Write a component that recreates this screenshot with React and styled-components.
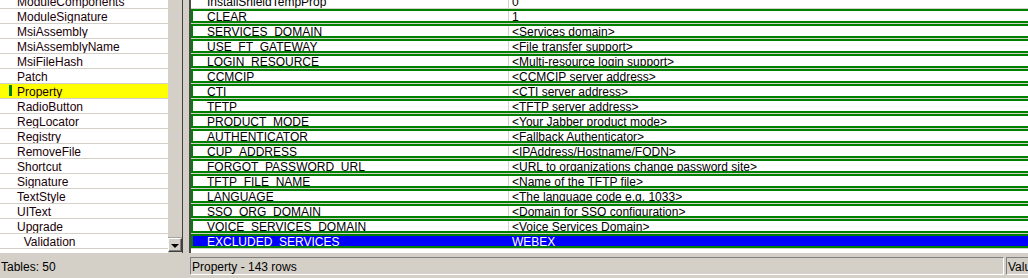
import React from 'react';
import styled, { createGlobalStyle, css } from 'styled-components';

const tables = [
  { name: 'ModuleComponents' },
  { name: 'ModuleSignature' },
  { name: 'MsiAssembly' },
  { name: 'MsiAssemblyName' },
  { name: 'MsiFileHash' },
  { name: 'Patch' },
  { name: 'Property', current: true },
  { name: 'RadioButton' },
  { name: 'RegLocator' },
  { name: 'Registry' },
  { name: 'RemoveFile' },
  { name: 'Shortcut' },
  { name: 'Signature' },
  { name: 'TextStyle' },
  { name: 'UIText' },
  { name: 'Upgrade' },
  { name: '_Validation' },
];

const properties = [
  { key: 'InstallShieldTempProp', value: '0' },
  { key: 'CLEAR', value: '1', changed: true },
  { key: 'SERVICES_DOMAIN', value: '<Services domain>', changed: true },
  { key: 'USE_FT_GATEWAY', value: '<File transfer support>', changed: true },
  { key: 'LOGIN_RESOURCE', value: '<Multi-resource login support>', changed: true },
  { key: 'CCMCIP', value: '<CCMCIP server address>', changed: true },
  { key: 'CTI', value: '<CTI server address>', changed: true },
  { key: 'TFTP', value: '<TFTP server address>', changed: true },
  { key: 'PRODUCT_MODE', value: '<Your Jabber product mode>', changed: true },
  { key: 'AUTHENTICATOR', value: '<Fallback Authenticator>', changed: true },
  { key: 'CUP_ADDRESS', value: '<IPAddress/Hostname/FQDN>', changed: true },
  { key: 'FORGOT_PASSWORD_URL', value: '<URL to organizations change password site>', changed: true },
  { key: 'TFTP_FILE_NAME', value: '<Name of the TFTP file>', changed: true },
  { key: 'LANGUAGE', value: '<The language code e.g. 1033>', changed: true },
  { key: 'SSO_ORG_DOMAIN', value: '<Domain for SSO configuration>', changed: true },
  { key: 'VOICE_SERVICES_DOMAIN', value: '<Voice Services Domain>', changed: true },
  { key: 'EXCLUDED_SERVICES', value: 'WEBEX', changed: true, selected: true },
];

function App() {
  return (
    <>
      <GlobalStyle />
      <Window>
        <Main>
          <TablePane>
            <TableList>
              {tables.map((t) => (
                <TableItem key={t.name} $current={t.current}>
                  {t.name}
                </TableItem>
              ))}
            </TableList>
            <ScrollBar>
              <Thumb />
              <DownButton>
                <Arrow />
              </DownButton>
            </ScrollBar>
          </TablePane>
          <Splitter />
          <RowPane>
            <Grid>
              {properties.map((p) => (
                <Row key={p.key} $changed={p.changed} $selected={p.selected}>
                  <NameCell $selected={p.selected}>{p.key}</NameCell>
                  <ValueCell>{p.value}</ValueCell>
                </Row>
              ))}
            </Grid>
          </RowPane>
        </Main>
        <StatusBar>
          <StatusPane $width={188} $flat>Tables: 50</StatusPane>
          <StatusPane $width={814}>Property - 143 rows</StatusPane>
          <StatusPane $width={80}>Value</StatusPane>
        </StatusBar>
      </Window>
    </>
  );
}

const GlobalStyle = createGlobalStyle`
  html, body {
    margin: 0;
    padding: 0;
    background: #d4d0c8;
    overflow: hidden;
  }
  body {
    font-family: "Liberation Sans", Arial, sans-serif;
    font-size: 12px;
    color: #000;
  }
`;

const Window = styled.div`
  width: 1028px;
  height: 278px;
  display: flex;
  flex-direction: column;
  overflow: hidden;
`;

const Main = styled.div`
  display: flex;
  height: 253px;
  flex: none;
`;

const TablePane = styled.div`
  display: flex;
  width: 183px;
  flex: none;
`;

const TableList = styled.div`
  width: 168px;
  background: #fff;
  overflow: hidden;
  & > :first-child {
    margin-top: -6px;
  }
`;

const TableItem = styled.div`
  position: relative;
  height: 15px;
  box-sizing: border-box;
  padding: 2px 0 0 17px;
  line-height: 13px;
  border-bottom: 1px solid #d4d0c8;
  overflow: hidden;
  white-space: nowrap;
  color: #1a0008;
  background: ${(p) => (p.$current ? '#ffff00' : '#fff')};
  ${(p) =>
    p.$current &&
    css`
      &::before {
        content: '';
        position: absolute;
        left: 9px;
        top: 1px;
        width: 3px;
        height: 11px;
        background: #008000;
      }
    `}
`;

const ScrollBar = styled.div`
  width: 14px;
  display: flex;
  flex-direction: column;
  background: #d4d0c8;
  border-right: 1px solid #404040;
`;

const Thumb = styled.div`
  flex: 1;
  border-bottom: 1px solid #a8a49c;
`;

const DownButton = styled.div`
  height: 14px;
  margin-bottom: 1px;
  box-sizing: border-box;
  border: 1px solid;
  border-color: #fff #404040 #404040 #fff;
  box-shadow: inset -1px -1px 0 #808080;
  display: flex;
  align-items: center;
  justify-content: center;
`;

const Arrow = styled.div`
  width: 0;
  height: 0;
  border-left: 4px solid transparent;
  border-right: 4px solid transparent;
  border-top: 4px solid #000;
  margin-top: 1px;
`;

const Splitter = styled.div`
  width: 6px;
  flex: none;
  background: #d4d0c8;
`;

const RowPane = styled.div`
  flex: 1;
  background: #fff;
  border-left: 2px solid #4a4a4a;
  overflow: hidden;
`;

const Grid = styled.div`
  width: 860px;
  margin-top: -6px;
`;

const Row = styled.div`
  position: relative;
  display: flex;
  height: 15px;
  box-sizing: border-box;
  border-bottom: 1px solid #d4d0c8;
  background: ${(p) => (p.$selected ? '#0000ff' : '#fff')};
  color: ${(p) => (p.$selected ? '#fff' : '#000')};
  ${(p) =>
    p.$changed &&
    css`
      &::after {
        content: '';
        position: absolute;
        left: 0;
        right: 0;
        top: 0;
        height: 14px;
        box-sizing: border-box;
        border: 2px solid #008000;
      }
    `}
`;

const NameCell = styled.div`
  width: 318px;
  flex: none;
  box-sizing: border-box;
  padding: 2px 0 0 16px;
  line-height: 13px;
  height: 14px;
  border-right: 1px solid ${(p) => (p.$selected ? '#0000ff' : '#d4d0c8')};
  overflow: hidden;
  white-space: nowrap;
`;

const ValueCell = styled.div`
  flex: 1;
  padding: 2px 0 0 3px;
  line-height: 13px;
  height: 14px;
  box-sizing: border-box;
  overflow: hidden;
  white-space: nowrap;
`;

const StatusBar = styled.div`
  height: 25px;
  flex: none;
  display: flex;
  gap: 2px;
  padding-top: 4px;
  box-sizing: border-box;
  background: #d4d0c8;
`;

const StatusPane = styled.div`
  width: ${(p) => p.$width}px;
  flex: none;
  height: 18px;
  box-sizing: border-box;
  padding: 1px 0 0 1px;
  line-height: 16px;
  white-space: nowrap;
  overflow: hidden;
  border: 1px solid;
  border-color: ${(p) => (p.$flat ? 'transparent' : '#808080 #fff #fff #808080')};
  ${(p) => p.$flat && css`padding-left: 0;`}
`;

export default App;
